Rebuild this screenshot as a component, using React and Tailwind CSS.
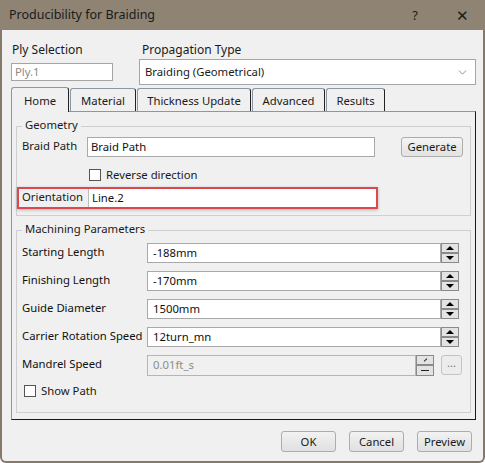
import { ChevronDown } from "lucide-react";

const font = { fontFamily: '"Noto Sans", "Open Sans", sans-serif' };

function SpinBox({ value, disabled = false }) {
  return (
    <div className="flex items-center">
      <div
        className={`flex h-[20px] w-[294px] items-center border border-[#a9a9a9] pl-[5px] ${
          disabled ? "bg-[#f0f0f0] text-[#8d8d8d]" : "bg-white text-[#111]"
        }`}
      >
        {value}
      </div>
      <div className="flex h-[20px] w-[18px] flex-col">
        {["up", "down"].map((dir) => (
          <div
            key={dir}
            className="flex h-[10px] w-[18px] items-center justify-center border border-[#8a8a8a] bg-[#e3e3e3]"
          >
            <div
              className={`h-0 w-0 border-x-[4px] border-x-transparent ${
                dir === "up" ? "border-b-[4px] border-b-black" : "border-t-[4px] border-t-black"
              }`}
            />
          </div>
        ))}
      </div>
    </div>
  );
}

function Row({ label, children }) {
  return (
    <div className="flex h-[28px] items-center">
      <div className="w-[125px] whitespace-nowrap pb-[3px] text-[#111]">{label}</div>
      {children}
    </div>
  );
}

function Checkbox({ label }) {
  return (
    <div className="flex items-center gap-[5px]">
      <div className="h-[12px] w-[12px] border border-[#555] bg-white" />
      <span>{label}</span>
    </div>
  );
}

export default function App() {
  const tabs = ["Material", "Thickness Update", "Advanced", "Results"];
  const tabWidths = ["w-[66px]", "w-[114px]", "w-[73px]", "w-[59px]"];

  return (
    <div
      className="h-[463px] w-[485px] overflow-hidden whitespace-nowrap bg-white text-[11.3px] leading-none text-[#1a1a1a]"
      style={font}
    >
      <div className="flex h-full flex-col rounded-b-[6px] border-x-2 border-b-2 border-[#857a6a] bg-[#f0f0f0]">
        {/* title bar */}
        <div className="-mx-[2px] flex h-[30px] items-center bg-[#8f8474] pl-[9px] text-[12.5px]">
          <span className="flex-1">Producibility for Braiding</span>
          <span className="mr-[38px] text-[13px]">?</span>
          <span className="mr-[16px] text-[15px] font-light">✕</span>
        </div>

        {/* ply / propagation */}
        <div className="flex pl-[9px]">
          <div className="flex w-[102px] flex-col">
            <span className="mt-[14px] h-[15px] pl-[1px] text-[12px]">Ply Selection</span>
            <div className="mt-[4px] flex h-[18px] items-center border border-[#a5a5a5] bg-white pl-[3px] text-[#8a8a8a]">
              Ply.1
            </div>
          </div>
          <div className="ml-[26px] flex flex-col">
            <span className="mt-[14px] h-[15px] pl-[3px] text-[12px]">Propagation Type</span>
            <div className="flex h-[26px] w-[337px] items-center justify-between border border-[#a5a5a5] bg-white pl-[5px] pr-[6px]">
              <span>Braiding (Geometrical)</span>
              <ChevronDown size={13} strokeWidth={1.2} className="text-[#555]" />
            </div>
          </div>
        </div>

        {/* tabs */}
        <div className="mt-[2px] flex items-end pl-[9px]">
          <div className="relative z-10 -mb-px flex h-[25px] w-[58px] items-center justify-center rounded-t-[3px] border-l border-r border-t border-[#8a97a6] border-r-[#222] bg-[#f0f0f0] pt-[2px]">
            Home
          </div>
          {tabs.map((t, i) => (
            <div
              key={t}
              className={`flex h-[23px] ${tabWidths[i]} ml-px items-center justify-center rounded-t-[3px] border-l border-r border-t border-[#8a97a6] border-r-[#222] bg-[#f0f0f0] pt-[2px]`}
            >
              {t}
            </div>
          ))}
        </div>

        {/* panel */}
        <div className="ml-[9px] mr-[7px] flex h-[309px] flex-col border border-[#8a97a6] border-b-[#1a1a1a] border-r-[#1a1a1a] px-[4px]">
          {/* Geometry */}
          <div className="relative mt-[14px] h-[90px] border border-[#cfcfcf] pl-[5px]">
            <span className="absolute -top-[8px] left-[5px] bg-[#f0f0f0] px-[3px]">Geometry</span>
            <div className="mt-[10px] flex items-center">
              <span className="w-[65px] pb-[3px]">Braid Path</span>
              <div className="flex h-[20px] w-[288px] items-center border border-[#a9a9a9] bg-white pl-[3px] text-[#111]">
                Braid Path
              </div>
              <div className="ml-[26px] flex h-[20px] w-[62px] items-center justify-center rounded-[3px] border border-[#adadad] bg-gradient-to-b from-[#f4f4f4] to-[#e2e2e2]">
                Generate
              </div>
            </div>
            <div className="ml-[67px] mt-[12px]">
              <Checkbox label="Reverse direction" />
            </div>
            <div className="-ml-[5px] mt-[6px] flex h-[22px] w-[361px] items-stretch border-2 border-[#e0474c] shadow-[0_1px_3px_rgba(0,0,0,0.25)]">
              <span className="flex w-[69px] items-center pb-[3px] pl-[3px]">Orientation</span>
              <div className="flex flex-1 items-center border-l border-[#bdbdbd] bg-white pl-[3px] text-[#111]">
                Line.2
              </div>
            </div>
          </div>

          {/* Machining parameters */}
          <div className="relative mt-[14px] h-[183px] border border-[#cfcfcf] pl-[5px] pt-[8px]">
            <span className="absolute -top-[8px] left-[5px] bg-[#f0f0f0] px-[3px]">Machining Parameters</span>
            <Row label="Starting Length">
              <SpinBox value="-188mm" />
            </Row>
            <Row label="Finishing Length">
              <SpinBox value="-170mm" />
            </Row>
            <Row label="Guide Diameter">
              <SpinBox value="1500mm" />
            </Row>
            <Row label="Carrier Rotation Speed">
              <SpinBox value="12turn_mn" />
            </Row>
            <Row label="Mandrel Speed">
              <div className="flex items-center">
                <div className="flex h-[21px] w-[269px] items-center border border-[#b5b5b5] bg-[#f0f0f0] pl-[5px] text-[#8d8d8d]">
                  0.01ft_s
                </div>
                <div className="flex h-[21px] w-[18px] flex-col">
                  <div className="flex h-[10px] items-center justify-center border border-[#8a8a8a] bg-[#e3e3e3]">
                    <div className="h-[4px] w-px rotate-45 bg-[#222]" />
                  </div>
                  <div className="flex h-[11px] items-center justify-center border border-[#8a8a8a] bg-[#e3e3e3]">
                    <div className="h-px w-[8px] bg-[#222]" />
                  </div>
                </div>
                <div className="ml-[7px] flex h-[20px] w-[21px] items-center justify-center rounded-[3px] border border-[#c4c4c4] bg-[#ececec] pb-[4px] text-[#777]">
                  ...
                </div>
              </div>
            </Row>
            <div className="mt-[6px] pl-[2px]">
              <Checkbox label="Show Path" />
            </div>
          </div>
        </div>

        {/* bottom buttons */}
        <div className="mt-[11px] flex justify-end gap-[13px] pr-[11px]">
          {["OK", "Cancel", "Preview"].map((b) => (
            <div
              key={b}
              className="flex h-[21px] w-[55px] items-center justify-center rounded-[3px] border border-[#adadad] bg-gradient-to-b from-[#f2f2f2] to-[#e0e0e0]"
            >
              {b}
            </div>
          ))}
        </div>
      </div>
    </div>
  );
}
